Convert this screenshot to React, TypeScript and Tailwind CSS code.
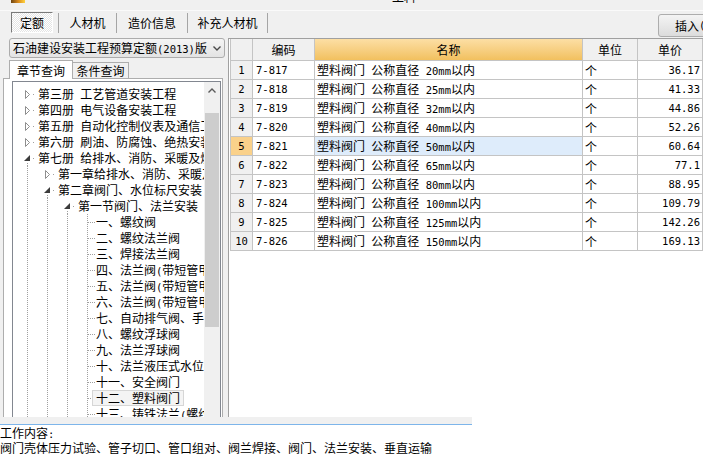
import React from 'react';

type TreeNode = { label: string; level: number; kind: 'closed' | 'open' | 'leaf'; selected?: boolean };

const treeNodes: TreeNode[] = [
  { label: '第三册 工艺管道安装工程', level: 0, kind: 'closed' },
  { label: '第四册 电气设备安装工程', level: 0, kind: 'closed' },
  { label: '第五册 自动化控制仪表及通信工程', level: 0, kind: 'closed' },
  { label: '第六册 刷油、防腐蚀、绝热安装工程', level: 0, kind: 'closed' },
  { label: '第七册 给排水、消防、采暖及燃气工程', level: 0, kind: 'open' },
  { label: '第一章给排水、消防、采暖及燃气管道', level: 1, kind: 'closed' },
  { label: '第二章阀门、水位标尺安装', level: 1, kind: 'open' },
  { label: '第一节阀门、法兰安装', level: 2, kind: 'open' },
  { label: '一、螺纹阀', level: 3, kind: 'leaf' },
  { label: '二、螺纹法兰阀', level: 3, kind: 'leaf' },
  { label: '三、焊接法兰阀', level: 3, kind: 'leaf' },
  { label: '四、法兰阀(带短管甲乙)焊接', level: 3, kind: 'leaf' },
  { label: '五、法兰阀(带短管甲乙)承插', level: 3, kind: 'leaf' },
  { label: '六、法兰阀(带短管甲乙)法兰', level: 3, kind: 'leaf' },
  { label: '七、自动排气阀、手动放风阀', level: 3, kind: 'leaf' },
  { label: '八、螺纹浮球阀', level: 3, kind: 'leaf' },
  { label: '九、法兰浮球阀', level: 3, kind: 'leaf' },
  { label: '十、法兰液压式水位控制阀', level: 3, kind: 'leaf' },
  { label: '十一、安全阀门', level: 3, kind: 'leaf' },
  { label: '十二、塑料阀门', level: 3, kind: 'leaf', selected: true },
  { label: '十三、铸铁法兰(螺纹连接)', level: 3, kind: 'leaf' },
];

const quotaRows = [
  { code: '7-817', size: '20', price: '36.17' },
  { code: '7-818', size: '25', price: '41.33' },
  { code: '7-819', size: '32', price: '44.86' },
  { code: '7-820', size: '40', price: '52.26' },
  { code: '7-821', size: '50', price: '60.64' },
  { code: '7-822', size: '65', price: '77.1' },
  { code: '7-823', size: '80', price: '88.95' },
  { code: '7-824', size: '100', price: '109.79' },
  { code: '7-825', size: '125', price: '142.26' },
  { code: '7-826', size: '150', price: '169.13' },
];

const mono = "font-['DejaVu_Sans_Mono','Liberation_Mono',monospace] text-[10.5px]";

// ASCII runs get the narrow half-width look of the original bitmap font
const Mixed: React.FC<{ text: string }> = ({ text }) => (
  <>
    {text.split(/([\x20-\x7e]+)/).map((part, i) =>
      i % 2 === 1 ? (
        <span key={i} className={mono}>
          {part}
        </span>
      ) : (
        <React.Fragment key={i}>{part}</React.Fragment>
      )
    )}
  </>
);

const GuideCell: React.FC<{ kind?: 'line' | 'closed' | 'open' | 'leaf' }> = ({ kind = 'line' }) => (
  <svg width="20" height="16" className="shrink-0 block">
    {(kind === 'line' || kind === 'leaf') && (
      <line x1="9.5" y1="0" x2="9.5" y2="16" stroke="#a0a0a0" strokeDasharray="1 1" />
    )}
    {kind === 'leaf' && <line x1="10" y1="8.5" x2="17" y2="8.5" stroke="#a0a0a0" strokeDasharray="1 1" />}
    {kind === 'closed' && (
      <>
        <path d="M7.5 4.5 L11.5 8.5 L7.5 12.5 Z" fill="#ffffff" stroke="#8e8e8e" />
        <rect x="15" y="8" width="1" height="1" fill="#a0a0a0" />
      </>
    )}
    {kind === 'open' && (
      <>
        <path d="M12 5 L12 11 L6 11 Z" fill="#3c3c3c" />
        <rect x="15" y="8" width="1" height="1" fill="#a0a0a0" />
        <line x1="9.5" y1="13" x2="9.5" y2="16" stroke="#a0a0a0" strokeDasharray="1 1" />
      </>
    )}
  </svg>
);

const TreeRow: React.FC<{ node: TreeNode }> = ({ node }) => (
  <div className="flex h-[16px] items-center whitespace-nowrap">
    {Array.from({ length: node.level }).map((_, i) => (
      <GuideCell key={i} />
    ))}
    <GuideCell kind={node.kind} />
    {node.kind === 'leaf' ? (
      <span
        className={`-ml-[6px] h-[16px] px-[3px] border leading-[14px] ${
          node.selected ? 'border-[#d6d6d6] bg-[#f4f4f4]' : 'border-transparent'
        }`}
      >
        <Mixed text={node.label} />
      </span>
    ) : (
      <span className="leading-[16px]">
        <Mixed text={node.label} />
      </span>
    )}
  </div>
);

const App: React.FC = () => {
  return (
    <div className="w-[703px] h-[457px] overflow-hidden bg-[#f0f0f0] text-[12px] leading-[15px] text-black font-['Noto_Sans_CJK_SC','Noto_Sans',sans-serif]">
      {/* window title remnant */}
      <div className="h-[11px] flex items-start overflow-hidden border-b border-[#fafafa]">
        <div className="ml-[11px] w-[14px] h-[3px] bg-gradient-to-r from-[#6e4612] via-[#d4861c] to-[#ffd23c]" />
        <span className="ml-[367px] -mt-[9px] leading-[12px]">工料</span>
      </div>

      {/* top tabs */}
      <div className="h-[27px] flex items-start overflow-hidden">
        <div className="ml-[11px] mt-[1px] w-[42px] h-[21px] shrink-0 flex items-center justify-center border border-t-[#7a7a7a] border-l-[#7a7a7a] border-r-white border-b-white bg-[image:repeating-conic-gradient(#ffffff_0%_25%,#e4e4e4_0%_50%)] bg-[length:2px_2px]">
          定额
        </div>
        <div className="ml-[5px] mt-[2px] w-px h-[20px] shrink-0 bg-[#a5a5a5]" />
        <div className="mt-[1px] w-[57px] h-[21px] shrink-0 flex items-center justify-center">人材机</div>
        <div className="mt-[2px] w-px h-[20px] shrink-0 bg-[#a5a5a5]" />
        <div className="mt-[1px] w-[70px] h-[21px] shrink-0 flex items-center justify-center">造价信息</div>
        <div className="mt-[2px] w-px h-[20px] shrink-0 bg-[#a5a5a5]" />
        <div className="mt-[1px] w-[79px] h-[21px] shrink-0 flex items-center justify-center">补充人材机</div>
        <div className="mt-[2px] w-px h-[20px] shrink-0 bg-[#a5a5a5]" />
        <div className="ml-[390px] mt-[3px] w-[60px] h-[23px] shrink-0 flex items-center pl-[16px] whitespace-nowrap rounded-[3px] border border-[#adadad] bg-gradient-to-b from-[#f4f4f4] to-[#dcdcdc]">
          插入<Mixed text="(I)" />
        </div>
      </div>

      {/* main area */}
      <div className="h-[379px] flex overflow-hidden">
        {/* left: chapter tree */}
        <div className="w-[228px] shrink-0 flex flex-col">
          <div className="ml-[9px] w-[216px] h-[20px] shrink-0 flex items-center pl-[3px] rounded-[3px] border border-[#acacac] bg-gradient-to-b from-[#f5f5f5] to-[#e3e3e3] whitespace-nowrap">
            <span className="leading-[16px]">
              <Mixed text="石油建设安装工程预算定额(2013)版" />
            </span>
            <svg width="8" height="5" className="ml-auto mr-[3px]">
              <path d="M0.5 0.5 L4 4 L7.5 0.5" fill="none" stroke="#4a4a4a" strokeWidth="1.4" />
            </svg>
          </div>

          <div className="ml-[9px] mt-[2px] h-[19px] -mb-px flex items-end relative z-10">
            <div className="w-[64px] h-[19px] flex items-center justify-center border border-b-0 border-[#adadad] bg-white">
              章节查询
            </div>
            <div className="w-[56px] h-[17px] flex items-center justify-center border border-l-0 border-[#adadad] bg-[#f0f0f0]">
              条件查询
            </div>
          </div>

          <div className="ml-[3px] w-[220px] flex-1 min-h-0 flex flex-col border border-b-0 border-[#adadad] bg-white pl-[8px] pr-[1px] pt-[2px]">
            <div className="flex-1 min-h-0 flex border border-b-0 border-[#828790] overflow-hidden">
              <div className="flex-1 min-w-0 overflow-hidden pt-[4px] pl-[5px]">
                {treeNodes.map((n) => (
                  <TreeRow key={n.label} node={n} />
                ))}
              </div>
              <div className="w-[16px] shrink-0 flex flex-col bg-[#f0f0f0]">
                <div className="h-[17px] flex items-center justify-center">
                  <svg width="8" height="5">
                    <path d="M0.5 4.5 L4 1 L7.5 4.5" fill="none" stroke="#5a5a5a" strokeWidth="1.4" />
                  </svg>
                </div>
                <div className="mt-[14px] mx-px h-[214px] bg-[#cdcdcd]" />
              </div>
            </div>
          </div>
        </div>

        {/* right: quota table */}
        <div className="flex-1 border-l border-t border-[#a0a0a0] bg-white pl-px">
          <div className="w-[473px] grid grid-cols-[22px_62px_268px_55px_65px] border-l border-[#c4c4c4]">
            <div className="h-[22px] border-r border-b border-[#c4c4c4] bg-[#f0f0f0]" />
            <div className="h-[22px] border-r border-b border-[#c4c4c4] bg-[#f0f0f0] flex items-center justify-center">编码</div>
            <div className="h-[22px] border-r border-b border-[#c4c4c4] bg-gradient-to-b from-[#fcdfa4] to-[#f2c05e] flex items-center justify-center">名称</div>
            <div className="h-[22px] border-r border-b border-[#c4c4c4] bg-[#f0f0f0] flex items-center justify-center">单位</div>
            <div className="h-[22px] border-r border-b border-[#c4c4c4] bg-[#f0f0f0] flex items-center justify-center">单价</div>

            {quotaRows.map((r, i) => {
              const active = i === 4;
              return (
                <React.Fragment key={r.code}>
                  <div
                    className={`h-[19px] border-r border-b border-[#c4c4c4] flex items-center justify-center leading-[14px] ${
                      active ? 'bg-[#fad18a]' : 'bg-[#f0f0f0]'
                    }`}
                  >
                    <span className={mono}>{i + 1}</span>
                  </div>
                  <div className="h-[19px] border-r border-b border-[#c4c4c4] flex items-center pl-[3px] leading-[14px]">
                    <span className={mono}>{r.code}</span>
                  </div>
                  <div
                    className={`h-[19px] border-r border-b border-[#c4c4c4] flex items-center pl-[2px] whitespace-nowrap leading-[16px] ${
                      active ? 'bg-[#deecfb]' : ''
                    }`}
                  >
                    <span>
                      <Mixed text={`塑料阀门 公称直径 ${r.size}mm以内`} />
                    </span>
                  </div>
                  <div className="h-[19px] border-r border-b border-[#c4c4c4] flex items-center pl-[2px]">个</div>
                  <div className="h-[19px] border-r border-b border-[#c4c4c4] flex items-center justify-end pr-[2px] leading-[14px]">
                    <span className={mono}>{r.price}</span>
                  </div>
                </React.Fragment>
              );
            })}
          </div>
        </div>
      </div>

      {/* work content */}
      <div className="h-[40px] flex">
        <div className="w-[472px] shrink-0 flex flex-col">
          <div className="h-[7px] bg-[#f0f0f0]" />
          <div className="flex-1 border-t border-[#7db5ea] bg-white pt-px leading-[13px] whitespace-nowrap">
            <div>
              <Mixed text="工作内容:" />
            </div>
            <div>阀门壳体压力试验、管子切口、管口组对、阀兰焊接、阀门、法兰安装、垂直运输</div>
          </div>
        </div>
        <div className="flex-1 bg-white" />
      </div>
    </div>
  );
};

export default App;
